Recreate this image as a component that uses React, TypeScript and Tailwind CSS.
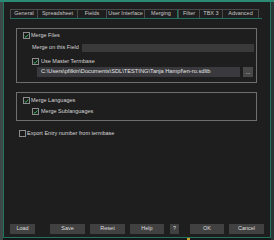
import React from "react";

const Check = ({ checked }: { checked: boolean }) => (
  <span className="w-[7px] h-[7px] shrink-0 border border-[#8c8c8c] bg-[#1b1b1b] flex items-center justify-center">
    {checked && (
      <svg width="6" height="6" viewBox="0 0 6 6">
        <path d="M0.8 3.1 L2.4 4.7 L5.3 1.1" stroke="#3fbf6a" strokeWidth="1.1" fill="none" />
      </svg>
    )}
  </span>
);

const tabs: { label: string; w: string; active?: boolean }[] = [
  { label: "General", w: "w-[27px]" },
  { label: "Spreadsheet", w: "w-[40px]" },
  { label: "Fields", w: "w-[29px]" },
  { label: "User Interface", w: "w-[38px]" },
  { label: "Merging", w: "w-[34px]", active: true },
  { label: "Filter", w: "w-[21px]" },
  { label: "TBX 3", w: "w-[23px]" },
  { label: "Advanced", w: "w-[36px]" },
];

export default function App() {
  return (
    <div className="w-[274px] h-[240px] bg-[#161616] flex flex-col overflow-hidden font-['Liberation_Sans',sans-serif] text-[5.5px] leading-none text-[#d6d6d6]">
      <div className="h-[2px] w-full bg-[#2a8a73] shrink-0" />
      <div className="flex flex-1">
        <div className="w-[3px] bg-[#3d4745]" />
        <div className="w-[268px] flex flex-col">
          <div className="h-[236px] flex flex-col bg-[#1e1e1e] border-x border-b border-[#1f7560]">
            {/* tabs */}
            <div className="mt-[7px] ml-[6px] w-[252px] h-[10px] flex border-b border-[#1f7560]">
              {tabs.map((t) => (
                <div
                  key={t.label}
                  className={`${t.w} h-full flex items-center justify-center whitespace-nowrap border-t border-l border-[#4a4a4a] text-[#c8c8c8] ${t.active ? "border-r border-r-[#1f7560]" : ""}`}
                >
                  {t.label}
                </div>
              ))}
              <div className="flex-1 border-l border-[#4a4a4a]" />
            </div>

            {/* group 1 */}
            <div className="mt-[9px] ml-[12px] w-[241px] h-[55px] border border-[#6e6e6e] flex flex-col">
              <div className="mt-[3px] ml-[6px] flex items-center gap-[1px]">
                <Check checked />
                <span>Merge Files</span>
              </div>
              <div className="mt-[5px] ml-[15px] flex items-center h-[8px]">
                <span className="w-[50px]">Merge on this Field</span>
                <div className="w-[172px] h-[8px] bg-[#3a3a3a]" />
              </div>
              <div className="mt-[6px] ml-[15px] flex items-center gap-[2px]">
                <Check checked />
                <span>Use Master Termbase</span>
              </div>
              <div className="mt-[2px] ml-[20px] flex items-center">
                <div className="w-[203px] h-[10px] bg-[#3a3a3e] flex items-center pl-[4px] text-[#e4e4e4] text-[5.7px] whitespace-nowrap overflow-hidden">
                  C:\Users\pfilkin\Documents\SDL\TESTING\Tanja Hampf\en-ro.sdltb
                </div>
                <div className="ml-[3px] w-[10px] h-[10px] bg-[#484848] flex items-end justify-center pb-[2px] text-[#e0e0e0]">
                  ...
                </div>
              </div>
            </div>

            {/* group 2 */}
            <div className="mt-[9px] ml-[12px] w-[241px] h-[29px] border border-[#6e6e6e] flex flex-col">
              <div className="mt-[4px] ml-[6px] flex items-center gap-[1px]">
                <Check checked />
                <span>Merge Languages</span>
              </div>
              <div className="mt-[4px] ml-[15px] flex items-center gap-[2px]">
                <Check checked />
                <span>Merge Sublanguages</span>
              </div>
            </div>

            <div className="mt-[9px] ml-[15px] flex items-center gap-[1px]">
              <Check checked={false} />
              <span>Export Entry number from termbase</span>
            </div>

            {/* buttons */}
            <div className="mt-auto mb-[3px] ml-[6px] flex h-[10px] text-[#dedede]">
              <div className="w-[25px] bg-[#414141] flex items-center justify-center">Load</div>
              <div className="ml-[15px] w-[35px] bg-[#414141] flex items-center justify-center">Save</div>
              <div className="ml-[5px] w-[35px] bg-[#414141] flex items-center justify-center">Reset</div>
              <div className="ml-[5px] w-[34px] bg-[#414141] flex items-center justify-center">Help</div>
              <div className="ml-[6px] w-[9px] bg-[#414141] flex items-center justify-center">?</div>
              <div className="ml-[11px] w-[34px] bg-[#414141] flex items-center justify-center">OK</div>
              <div className="ml-[5px] w-[35px] bg-[#414141] flex items-center justify-center">Cancel</div>
            </div>
          </div>
          <div className="flex-1 flex">
            <div className="ml-[184px] w-[3px] bg-[#c9a227]" />
          </div>
        </div>
        <div className="w-[3px] bg-[#2b3533]" />
      </div>
    </div>
  );
}
